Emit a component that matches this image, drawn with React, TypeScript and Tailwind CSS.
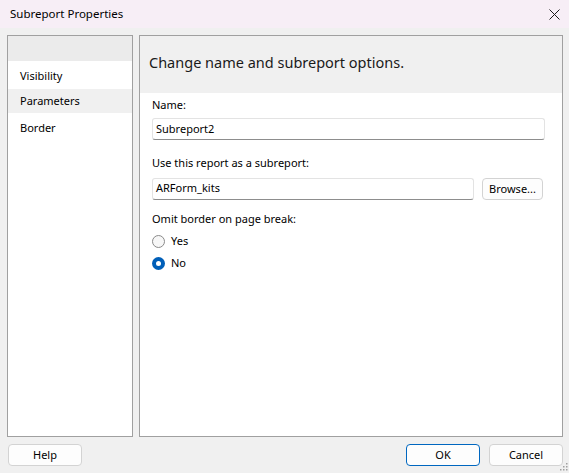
import React from 'react';

const font = { fontFamily: '"Noto Sans", "Open Sans", sans-serif' };

function clsx(...parts: (string | false | undefined)[]) {
  return parts.filter(Boolean).join(' ');
}

function Radio({ label, checked }: { label: string; checked?: boolean }) {
  return (
    <label className="flex items-center h-[16px] gap-[6px] text-[11px] text-black">
      {checked ? (
        <span className="w-[13px] h-[13px] rounded-full bg-[#005fb8] flex items-center justify-center">
          <span className="w-[5px] h-[5px] rounded-full bg-white" />
        </span>
      ) : (
        <span className="w-[13px] h-[13px] rounded-full border border-[#8a8a8a] bg-[#f7f7f7]" />
      )}
      {label}
    </label>
  );
}

function TextBox({ value, className }: { value: string; className?: string }) {
  return (
    <div
      className={clsx(
        'h-[22px] bg-white border border-[#e3e3e3] border-b-[#8d8d8d] rounded-[3px] flex items-center px-[3px] text-[11px] text-black',
        className
      )}
    >
      {value}
    </div>
  );
}

function Button({ label, primary, className }: { label: string; primary?: boolean; className?: string }) {
  return (
    <button
      className={clsx(
        'h-[22px] rounded-[4px] bg-[#fdfdfd] text-[11px] text-black flex items-center justify-center',
        primary ? 'border border-[#0067c0]' : 'border border-[#d3d3d3]',
        className
      )}
    >
      {label}
    </button>
  );
}

export default function App() {
  return (
    <div className="relative w-[569px] h-[473px] bg-[#f0f0f0] flex flex-col overflow-hidden" style={font}>
      {/* Title bar */}
      <div className="h-[28px] bg-[#f7eef6] flex items-center justify-between pl-[10px] pr-[8px]">
        <span className="text-[11.5px] text-black">Subreport Properties</span>
        <svg width="11" height="11" viewBox="0 0 11 11" className="mr-[1px]">
          <path d="M0.5 0.5 L10.5 10.5 M10.5 0.5 L0.5 10.5" stroke="#1a1a1a" strokeWidth="1" />
        </svg>
      </div>

      {/* Panels */}
      <div className="flex gap-[6px] pl-[7px] pr-[6px] pt-[7px] h-[409px]">
        {/* Left nav */}
        <div className="w-[126px] border border-[#a0a0a0] bg-white flex flex-col text-[11px] text-black">
          <div className="h-[25px] bg-[#ebebeb]" />
          <div className="h-[28px] flex items-center pl-[12px] pt-[2px]">Visibility</div>
          <div className="h-[24px] flex items-center pl-[12px] bg-[#f0f0f0]">Parameters</div>
          <div className="h-[30px] flex items-center pl-[12px]">Border</div>
        </div>

        {/* Right content */}
        <div className="flex-1 border border-[#a0a0a0] bg-white flex flex-col">
          <div className="h-[57px] bg-[#f0f0f0] flex items-center pl-[9px] pb-[3px]">
            <span className="text-[14.5px] text-[#1a1a1a]">Change name and subreport options.</span>
          </div>
          <div className="flex flex-col pl-[12px] pr-[17px] pt-[4px] text-[11px] text-black">
            <div className="h-[16px] leading-[16px]">Name:</div>
            <TextBox value="Subreport2" className="mt-[5px] w-[393px]" />
            <div className="h-[16px] leading-[16px] mt-[15px]">Use this report as a subreport:</div>
            <div className="flex items-center mt-[6px] gap-[8px]">
              <TextBox value="ARForm_kits" className="w-[322px]" />
              <Button label="Browse..." className="w-[61px] h-[21px] mt-[1px]" />
            </div>
            <div className="h-[16px] leading-[16px] mt-[11px]">Omit border on page break:</div>
            <div className="mt-[6px] flex flex-col gap-[6px]">
              <Radio label="Yes" />
              <Radio label="No" checked />
            </div>
          </div>
        </div>
      </div>

      {/* Footer */}
      <div className="flex items-center justify-between pl-[8px] pr-[6px] pt-[7px]">
        <Button label="Help" className="w-[74px]" />
        <div className="flex gap-[9px]">
          <Button label="OK" primary className="w-[74px]" />
          <Button label="Cancel" className="w-[74px]" />
        </div>
      </div>

      {/* Resize grip */}
      <svg width="9" height="9" viewBox="0 0 9 9" className="absolute right-[1px] bottom-[2px]">
        {[
          [7, 1],
          [4, 4],
          [7, 4],
          [1, 7],
          [4, 7],
          [7, 7],
        ].map(([x, y], i) => (
          <rect key={i} x={x} y={y} width="1.5" height="1.5" fill="#a0a0a0" />
        ))}
      </svg>
    </div>
  );
}
